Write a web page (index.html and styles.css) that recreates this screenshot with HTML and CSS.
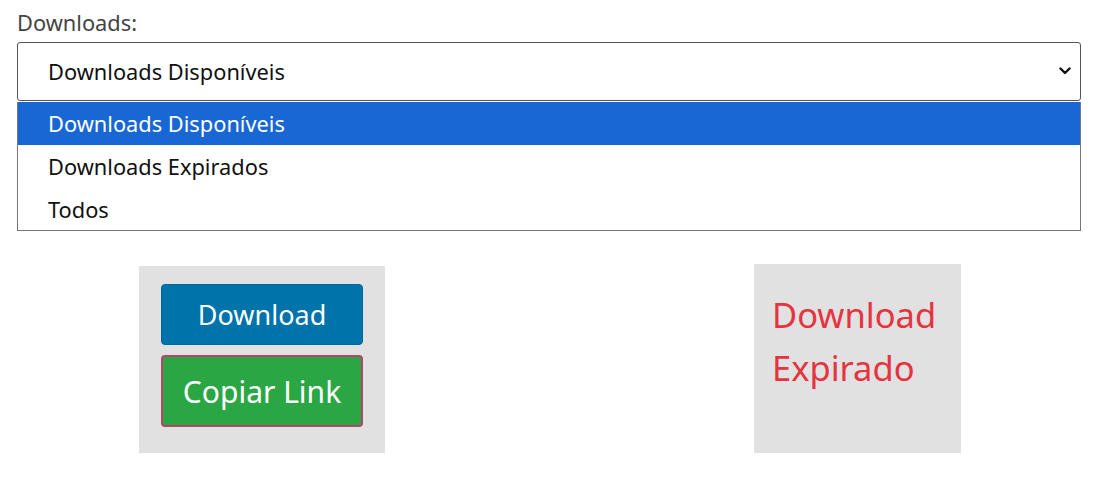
FILE: index.html
```html
<!DOCTYPE html>
<html lang="pt">
<head>
<meta charset="utf-8">
<link rel="stylesheet" href="styles.css">
</head>
<body>
<div class="page">
  <div class="label">Downloads:</div>
  <div class="select">
    <span class="select-text">Downloads Disponíveis</span>
    <svg class="chev" width="12" height="8" viewBox="0 0 12 8"><path d="M1.5 1.5 L6 6 L10.5 1.5" fill="none" stroke="#111" stroke-width="2.4" stroke-linecap="round" stroke-linejoin="round"/></svg>
  </div>
  <ul class="options">
    <li class="opt active">Downloads Disponíveis</li>
    <li class="opt">Downloads Expirados</li>
    <li class="opt">Todos</li>
  </ul>
  <div class="cards">
    <div class="card card-left">
      <button class="btn btn-blue">Download</button>
      <button class="btn btn-green">Copiar Link</button>
    </div>
    <div class="card card-right">
      <div class="expired">Download<br>Expirado</div>
    </div>
  </div>
</div>
</body>
</html>
```
FILE: styles.css
```css
* { box-sizing: border-box; }
html, body { margin: 0; padding: 0; background: #fff; }
body { font-family: "Noto Sans", "Open Sans", sans-serif; color: #222; }
.page { padding: 9px 19px 0 17px; width: 1100px; }
.label { font-size: 21.8px; line-height: 28px; color: #444; height: 33px; }
.select {
  height: 59px;
  border: 1px solid #555;
  border-radius: 3px;
  display: flex;
  align-items: center;
  justify-content: space-between;
  padding: 0 8px 0 30px;
  font-size: 21.8px;
  color: #111;
}
.select-text { margin-top: -1px; }
.chev { margin-right: 1px; margin-top: -2px; }
.options {
  list-style: none;
  margin: 1px 0 0 0;
  padding: 0;
  border: 1px solid #777;
  border-top: none;
  font-size: 21.8px;
}
.opt { height: 43px; display: flex; align-items: center; padding-left: 30px; color: #111; }
.opt.active { background: #1967d2; color: #fff; height: 43px; }
.opt:last-child { height: 42px; }
.cards { display: flex; margin-top: 35px; }
.card { background: #e1e1e1; }
.card-left {
  margin-left: 122px;
  width: 246px;
  height: 187px;
  padding: 18px 22px 0 22px;
  display: flex;
  flex-direction: column;
  gap: 10px;
}
.btn {
  font-family: inherit;
  color: #fff;
  border-radius: 4px;
  width: 202px;
  cursor: pointer;
  padding: 0;
}
.btn-blue {
  background: #0073aa;
  border: 1px solid #0066a0;
  height: 61px;
  font-size: 27px;
}
.btn-green {
  background: #2aa744;
  border: 2px solid #b0466a;
  height: 72px;
  font-size: 30px;
}
.card-right {
  margin-left: 369px;
  margin-top: -2px;
  width: 207px;
  height: 189px;
  padding: 24px 0 0 18px;
}
.expired { color: #e5333f; font-size: 34.5px; line-height: 53px; }
```
